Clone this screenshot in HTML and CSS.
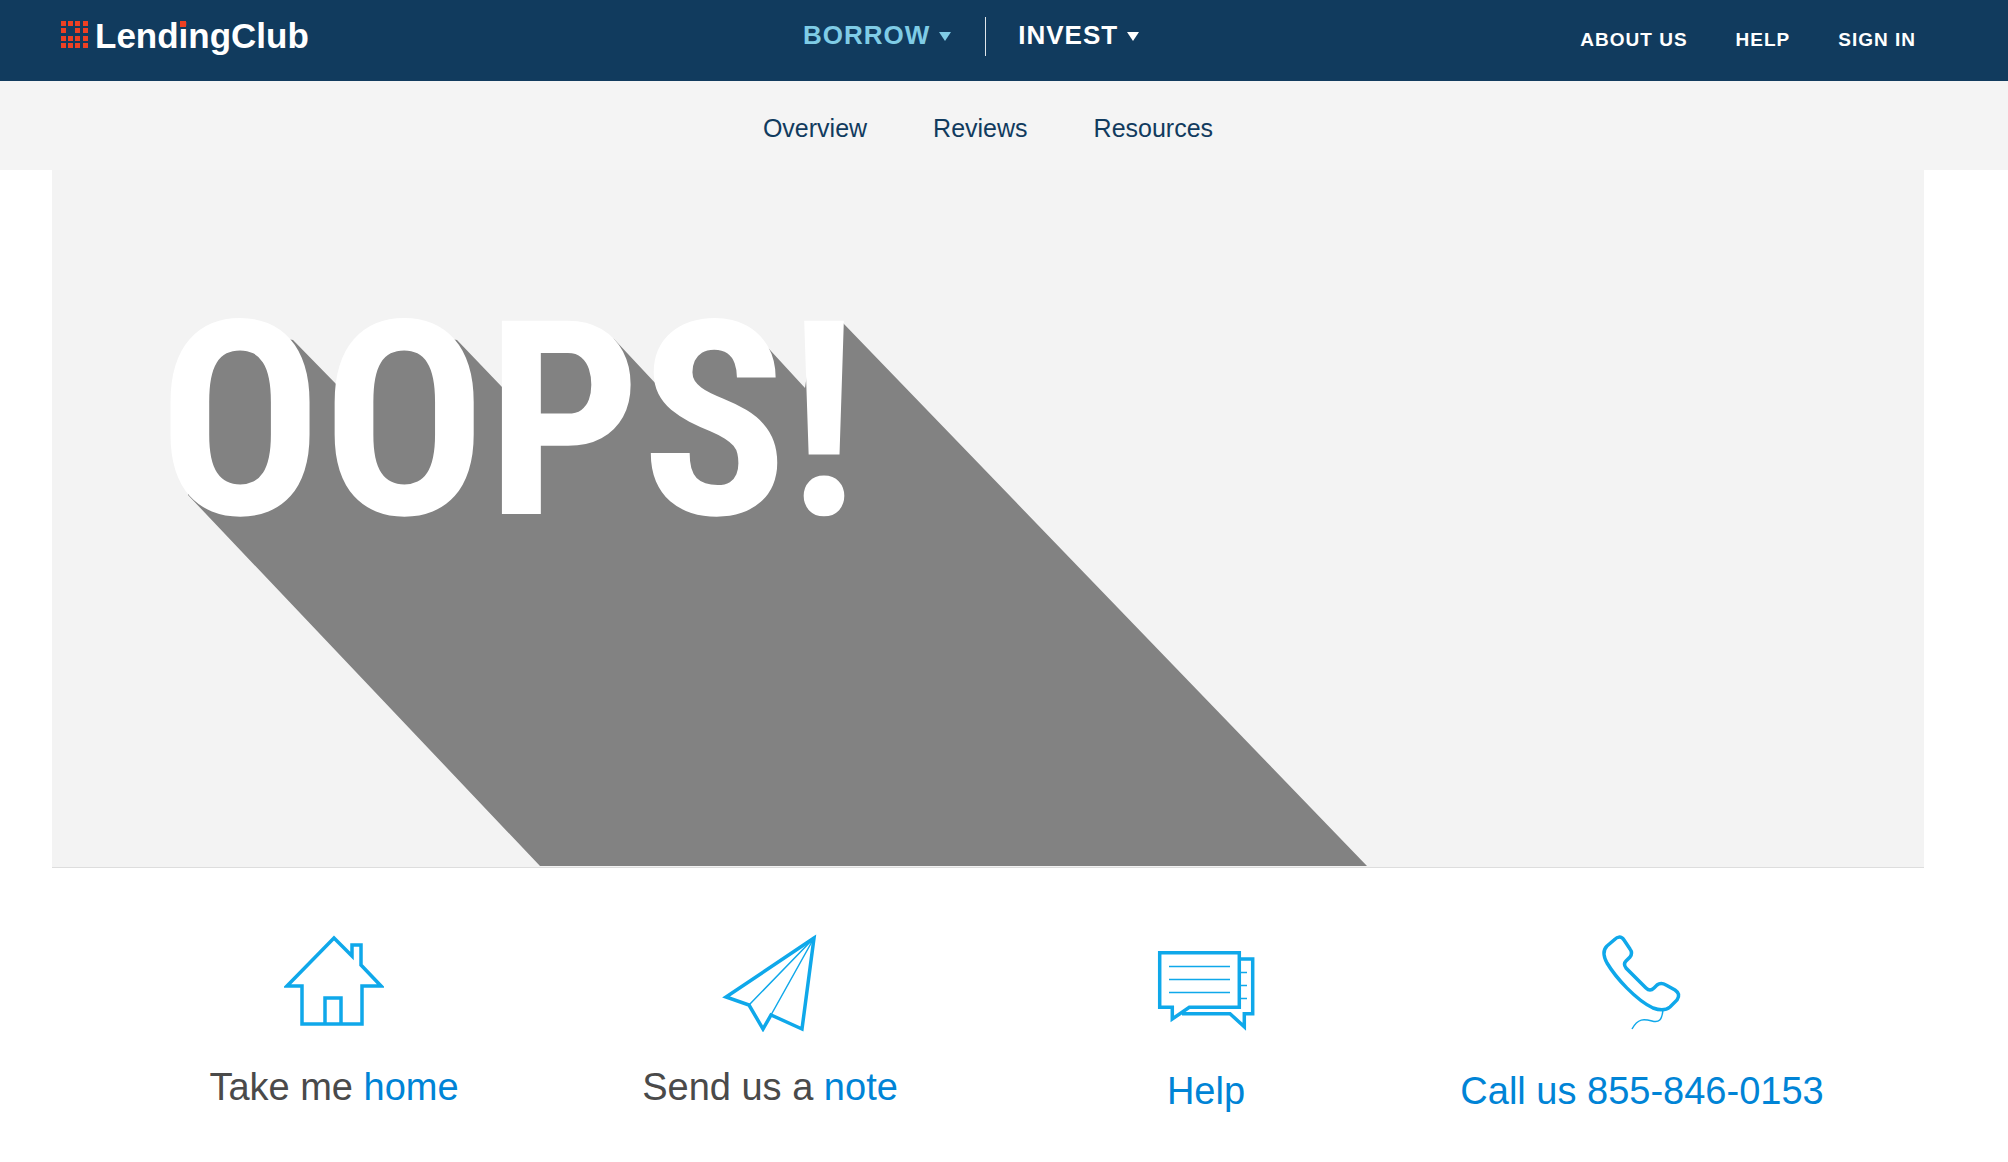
FILE: index.html
```
<!DOCTYPE html>
<html lang="en">
<head>
  <meta charset="UTF-8" />
  <meta name="viewport" content="width=device-width, initial-scale=1.0" />
  <title>LendingClub - Page Not Found</title>
  <link rel="stylesheet" href="styles.css">
</head>
<body>

  <header class="site-header">
    <a href="#" class="logo" aria-label="LendingClub">
      <svg width="260" height="64" viewBox="0 0 260 64">
        <path class="logo-dots" d="M1 21h5v5h-5z M8 21h5v5h-5z M15 21h5v5h-5z M23 21h5v5h-5z
          M1 28h5v5h-5z M15 28h5v5h-5z M23 28h5v5h-5z
          M1 36h5v5h-5z M8 36h5v5h-5z M15 36h5v5h-5z M23 36h5v5h-5z
          M1 43h5v5h-5z M8 43h5v5h-5z M15 43h5v5h-5z M23 43h5v5h-5z" />
        <text class="logo-text" x="35" y="48">LendingClub</text>
        <rect class="logo-dots" x="120" y="21" width="6" height="6" />
      </svg>
    </a>

    <nav class="main-nav">
      <button type="button" class="active">BORROW <span class="arrow"></span></button>
      <button type="button">INVEST <span class="arrow"></span></button>
    </nav>

    <nav class="user-nav">
      <a href="#">ABOUT US</a>
      <a href="#">HELP</a>
      <a href="#">SIGN IN</a>
    </nav>
  </header>

  <nav class="sub-nav">
    <a href="#">Overview</a>
    <a href="#">Reviews</a>
    <a href="#">Resources</a>
  </nav>

  <main>
    <section class="hero">
      <!-- long shadow sits behind the letters -->
      <svg viewBox="0 0 1872 696">
        <polygon class="hero-shadow" points="136,325 136,204 153,184 188,162 220,166 241,170 285,215 300,179 348,164 384,166 405,170 450,217 456,159 538,159 562,169 605,215 616,179 660,162 708,169 753,218 762,157 791,153 1315,696 488,696" />
        <text class="hero-text" x="106" y="344">OOPS!</text>
      </svg>
    </section>

    <section class="actions">
      <div class="action">
        <svg class="icon" viewBox="0 0 100 100">
          <path d="M50 6L68 24V13H77V33L97 54H78V92H18V54H3Z" />
          <path d="M41 92V66H57V92" />
        </svg>
        <p>Take me <a href="#">home</a></p>
      </div>

      <div class="action">
        <svg class="icon" viewBox="0 0 100 100">
          <path d="M94 6L6 65L29 73L43 97L51 83L82 97Z" />
          <path class="thin" d="M29 73L94 6L51 83" />
        </svg>
        <p>Send us a <a href="#">note</a></p>
      </div>

      <div class="action action-link">
        <svg class="icon" viewBox="0 0 100 100">
          <path d="M3.7 20.7H83.3V75.3H33.3L16.3 87V75.3H3.7Z" />
          <path d="M83.3 27H96.7V81.7H88.3V94.7L74 81.7H26" />
          <path class="thin" d="M13 34.5H74M13 47.5H74M13 60.5H74M84 40.5H91M84 53.5H91M84 66.5H91" />
        </svg>
        <p><a href="#">Help</a></p>
      </div>

      <div class="action action-link">
        <svg class="icon" viewBox="0 0 100 100">
          <path d="M15 14L22 8Q28 2 32 8L38 17Q41 21 38 25L34 29Q31 32 34 36L54 56Q58 60 62 56L65 53Q69 50 74 53L83 58Q89 62 85 68L78 75Q72 80 61 76C44 68 24 46 15 31Q9 20 15 14Z" />
          <path class="thin" d="M71 78C70 88 67 91 60 89C52 87 46 86 40 97" />
        </svg>
        <p><a href="#">Call us 855-846-0153</a></p>
      </div>
    </section>
  </main>

</body>
</html>
```
FILE: styles.css
```
* {
  box-sizing: border-box;
}

body {
  margin: 0;
  font-family: "Liberation Sans", Arial, sans-serif;
  background-color: #fff;
  color: #4a4a4a;
}

a {
  color: #0084d6;
  text-decoration: none;
}

.site-header {
  display: grid;
  grid-template-columns: 1fr auto 1fr;
  height: 81px;
  padding: 0 92px 0 60px;
  background-color: #113b5e;
}

.logo svg {
  display: block;
}

.logo-dots {
  fill: #ee4023;
}

.logo-text {
  fill: #fff;
  font-size: 35px;
  font-weight: bold;
}

.main-nav {
  display: flex;
  align-items: flex-start;
  padding-top: 17px;
}

.main-nav button {
  display: flex;
  align-items: center;
  height: 39px;
  padding: 0 34px 3px 0;
  border: 0;
  background: none;
  color: #fff;
  font-family: inherit;
  font-size: 26px;
  font-weight: bold;
  line-height: 30px;
  letter-spacing: 1px;
  cursor: pointer;
}

.main-nav button + button {
  padding-left: 32px;
  border-left: 1px solid #dfe5ea;
}

.main-nav .active {
  color: #7fcce6;
}

.arrow {
  margin: 3px 0 0 9px;
  border-top: 9px solid currentColor;
  border-left: 6px solid transparent;
  border-right: 6px solid transparent;
}

.user-nav {
  display: flex;
  justify-content: flex-end;
  gap: 48px;
  padding-top: 29px;
}

.user-nav a {
  color: #fff;
  font-size: 19px;
  font-weight: bold;
  line-height: 22px;
  letter-spacing: 1px;
}

.sub-nav {
  display: flex;
  justify-content: center;
  gap: 66px;
  height: 89px;
  padding: 32px 84px 0 52px;
  background-color: #f4f4f4;
}

.sub-nav a {
  color: #113b5e;
  font-size: 25px;
  line-height: 30px;
}

main {
  margin: 0 84px 0 52px;
}

.hero {
  padding-bottom: 1px;
  border-bottom: 1px solid #ddd;
  background-color: #f3f3f3;
}

.hero svg {
  display: block;
  width: 100%;
}

.hero-shadow {
  fill: #828282;
}

.hero-text {
  fill: #fff;
  font-family: "Roboto Condensed", Roboto, sans-serif;
  font-size: 272px;
  font-weight: bold;
}

.actions {
  display: grid;
  grid-template-columns: repeat(4, 1fr);
  padding: 64px 64px 50px;
}

.action {
  text-align: center;
}

.icon {
  display: block;
  width: 100px;
  height: 100px;
  margin: 0 auto;
  fill: none;
  stroke: #0fa8ea;
  stroke-width: 3.5;
}

.icon .thin {
  stroke-width: 1.5;
}

.action p {
  margin: 33px 0 0;
  font-size: 38px;
  line-height: 44px;
}

.action-link p {
  margin-top: 37px;
}

@media (max-width: 1100px) {
  .actions {
    grid-template-columns: 1fr 1fr;
    gap: 40px;
  }
}
```
